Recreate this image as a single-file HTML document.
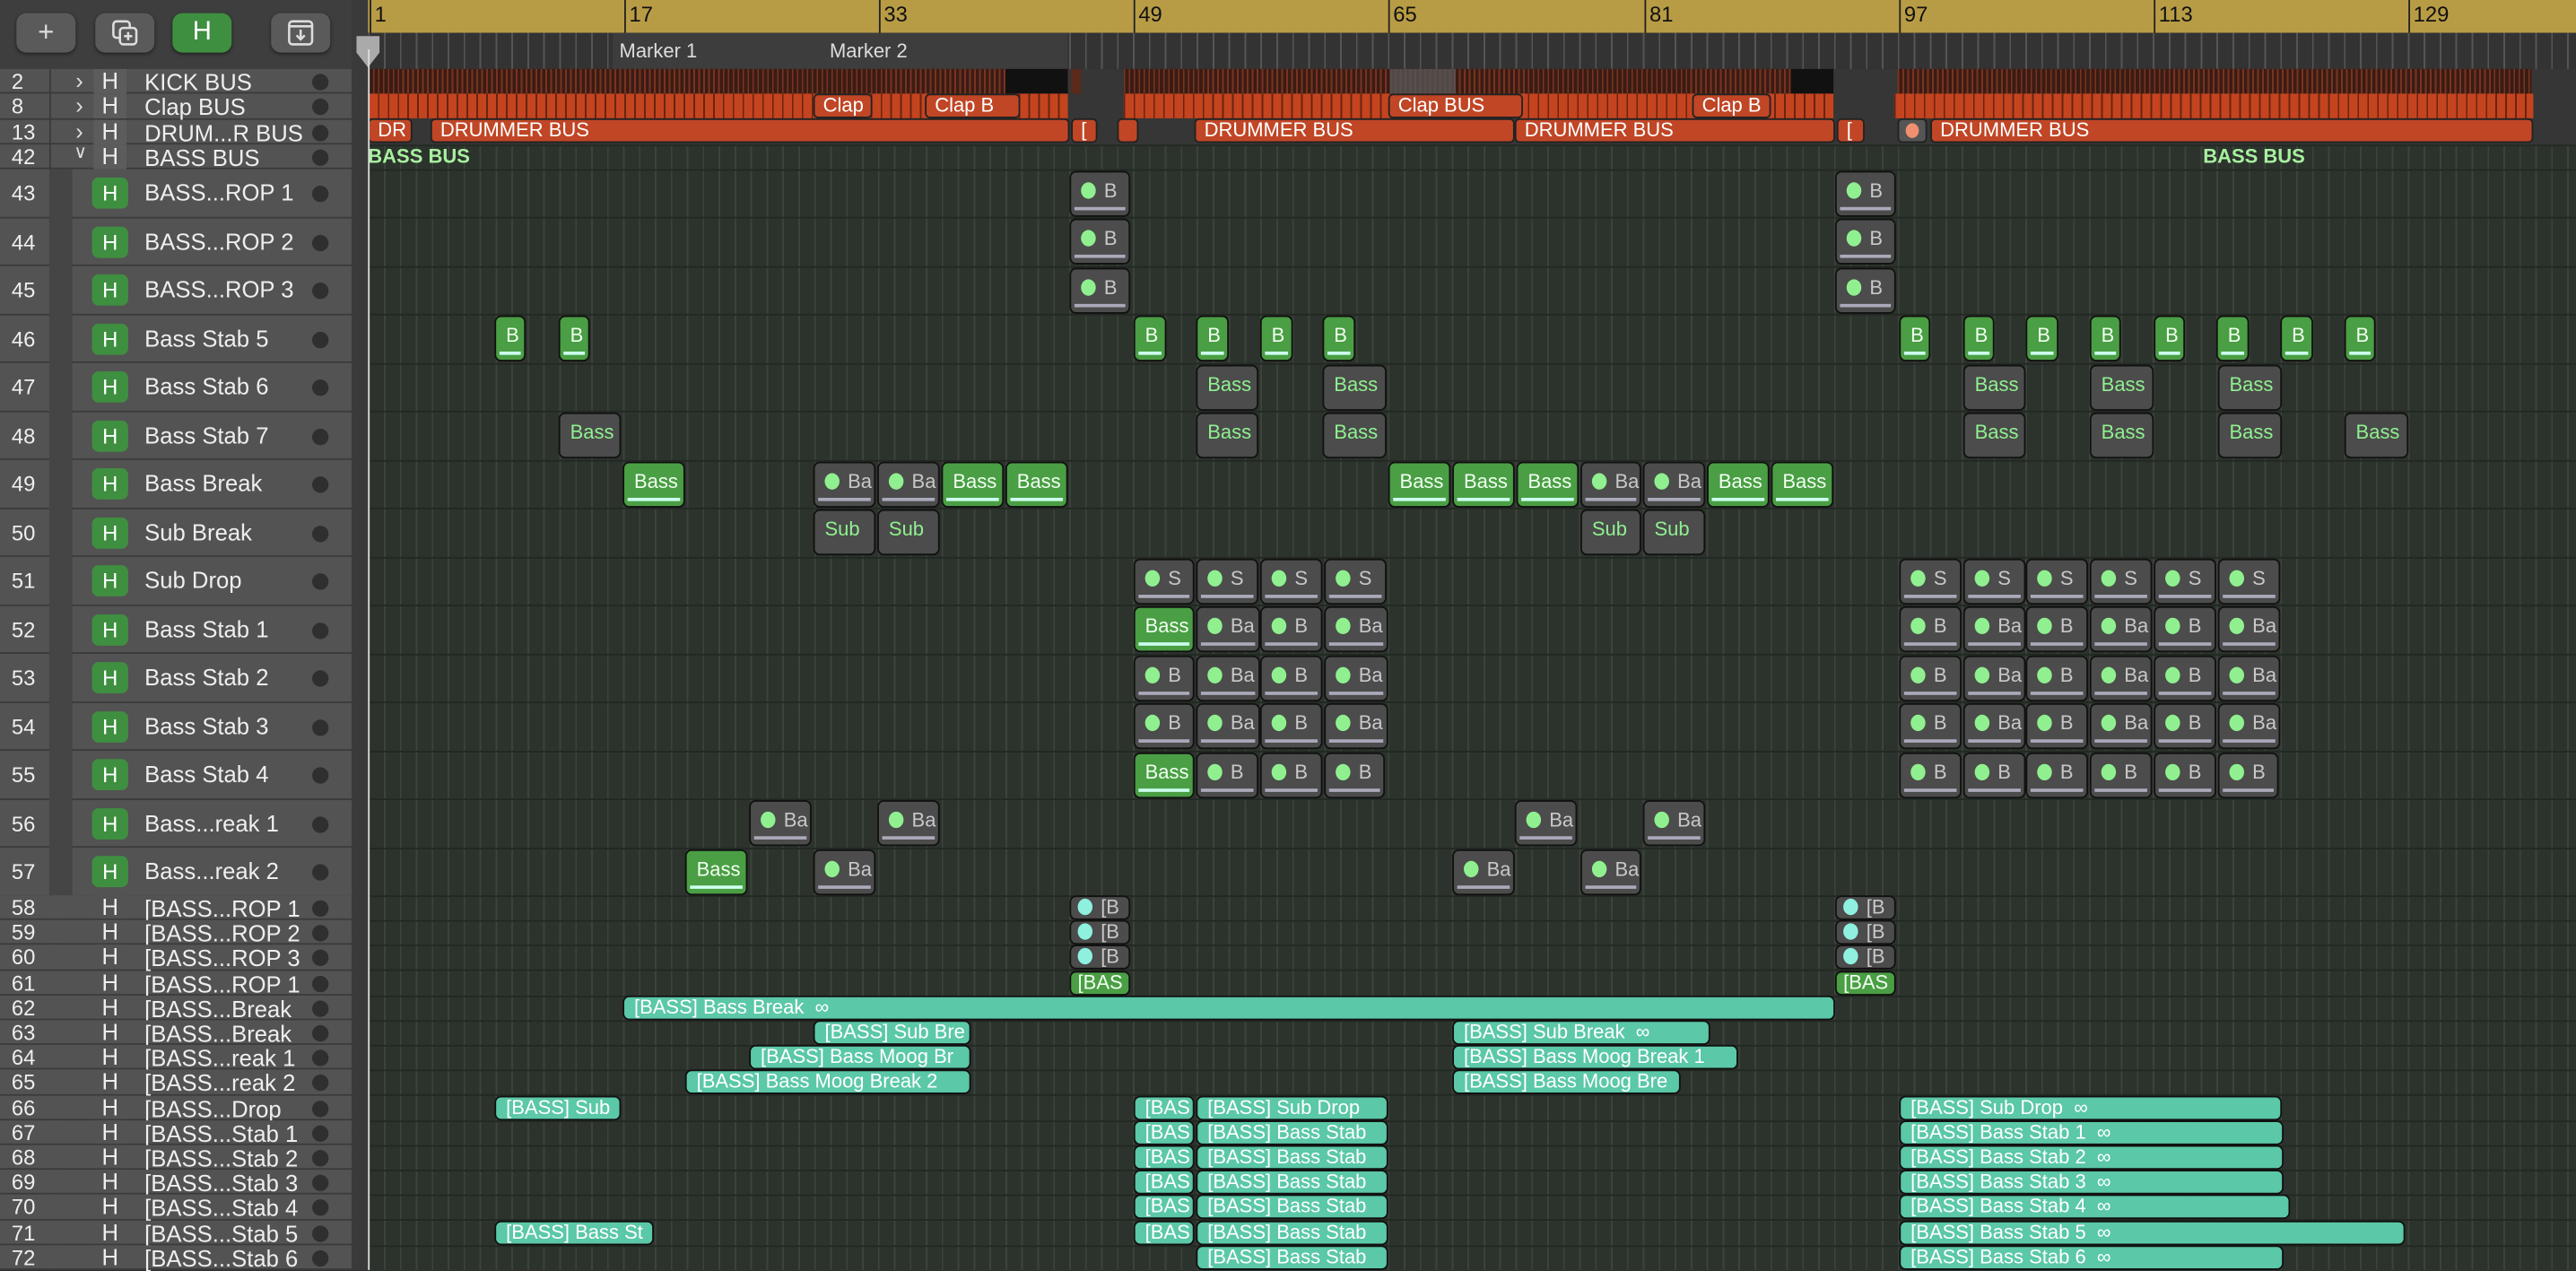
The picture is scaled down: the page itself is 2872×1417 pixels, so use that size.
<!DOCTYPE html>
<html><head><meta charset="utf-8"><style>
html,body{margin:0;padding:0;background:#2c332c;overflow:hidden;width:2872px;height:1416px}
#s{position:absolute;left:0;top:0;width:1568px;height:773px;transform:scale(1.83163);transform-origin:0 0;font-family:"Liberation Sans",sans-serif;background:#2c332c}
.a{position:absolute}
#tb{left:0;top:0;width:214px;height:42px;background:#3e3e3e}
.btn{position:absolute;top:8px;height:24px;width:36px;background:#5a5a5a;border-radius:6px;color:#ddd;text-align:center;line-height:24px;font-size:17px;box-shadow:0 1px 2px #222}
#div{left:214px;top:0;width:10px;height:773px;background:#3a3a3a}
#ruler{left:224px;top:0;width:1344px;height:20px;background:#b89c45}
.rn{position:absolute;top:0;height:20px;border-left:1px solid #222;font-size:13px;color:#111;padding-left:2px;line-height:18px}
#mk{left:224px;top:20px;width:1344px;height:22px;background:#333;background-image:repeating-linear-gradient(90deg,#555 0 1px,transparent 1px 9.7px)}
.row{position:absolute;left:0;width:214px;background:#535353;border-bottom:1px solid #3b3b3b;box-sizing:border-box;color:#eee;font-size:14px}
.num{position:absolute;left:7px;font-size:13px;color:#eee}
.nm{position:absolute;left:88px;white-space:nowrap}
.dot{position:absolute;left:190px;width:10px;height:10px;border-radius:50%;background:#2f2f2f}
.hb{position:absolute;left:56px;width:22px;height:19px;border-radius:4px;background:#3f8f40;color:#fff;text-align:center;line-height:19px;font-size:13px}
.hg{position:absolute;left:57px;width:20px;background:#5c5c5c;text-align:center;color:#eee}
#grid{left:224px;top:42px;width:1344px;height:731px;background-color:#2c332c;background-image:repeating-linear-gradient(90deg,#3b433b 0 1px,transparent 1px 9.7px)}
.hl{position:absolute;left:224px;width:1344px;height:1px;background:#222822}
.c{position:absolute;box-sizing:border-box;border:1px solid #111;border-radius:4px;overflow:hidden;white-space:nowrap;font-size:12px}
.b{height:28px;line-height:22px;padding-left:6px}
.s{height:15px;line-height:13px;font-size:12px;padding-left:4px}
.g{background:#4a9e44;color:#f0fff0}
.k{background:#4b4c4b;color:#c8c8c8}
.kg{background:#4b4c4b;color:#90f090}
.t{background:#5bc8a8;color:#fff;padding-left:6px}
.b.g::after,.b.k::after{content:"";position:absolute;left:2px;right:2px;bottom:3px;height:2px;background:#aab}
.b.g::after{background:#cfe}
.d{display:inline-block;width:9px;height:10px;border-radius:50%;background:#90f090;vertical-align:-1px;margin-right:5px}
.dc{background:#8ff0e0}
.rd{position:absolute;height:15px;background:#3a1c14;background-image:repeating-linear-gradient(90deg,#7a3320 0 1px,transparent 1px 3px)}
.or{position:absolute;height:15px;background:#c4441f;background-image:repeating-linear-gradient(90deg,#6a2410 0 1px,transparent 1px 6px)}
.lb{position:absolute;height:15px;background:#c04626;border-radius:3px;border:1px solid #222;box-sizing:border-box;color:#fff;font-size:12px;line-height:13px;padding-left:5px;white-space:nowrap;overflow:hidden}
</style></head><body><div id="s">
<div id="tb" class="a">
<div class="btn" style="left:10px">+</div>
<div class="btn" style="left:58px"><svg width="20" height="20" viewBox="0 0 20 20" style="margin-top:2px"><rect x="3" y="3" width="10" height="10" rx="2" fill="none" stroke="#ddd" stroke-width="1.4"/><rect x="7" y="7" width="10" height="10" rx="2" fill="#5a5a5a" stroke="#ddd" stroke-width="1.4"/><path d="M12 9.5v5M9.5 12h5" stroke="#ddd" stroke-width="1.4"/></svg></div>
<div class="btn" style="left:105px;background:#3f8f40;color:#fff;font-size:16px">H</div>
<div class="btn" style="left:165px"><svg width="20" height="20" viewBox="0 0 20 20" style="margin-top:2px"><rect x="3" y="3" width="14" height="14" rx="2" fill="none" stroke="#ddd" stroke-width="1.4"/><path d="M3 6h14M10 8v6M7.5 11.5L10 14l2.5-2.5" fill="none" stroke="#ddd" stroke-width="1.4"/></svg></div>
</div>
<div id="div" class="a"></div>
<div id="ruler" class="a">
<div class="rn" style="left:1px">1</div><div class="rn" style="left:156px">17</div><div class="rn" style="left:311px">33</div><div class="rn" style="left:466px">49</div><div class="rn" style="left:621px">65</div><div class="rn" style="left:777px">81</div><div class="rn" style="left:932px">97</div><div class="rn" style="left:1087px">113</div><div class="rn" style="left:1242px">129</div>
</div>
<div id="mk" class="a">
<div class="a" style="left:149px;top:0;width:127px;height:22px;background:#3d3d3d;color:#ddd;font-size:12px;line-height:22px;padding-left:4px;box-sizing:border-box">Marker 1</div>
<div class="a" style="left:276px;top:0;width:150px;height:22px;background:#3d3d3d;color:#ddd;font-size:12px;line-height:22px;padding-left:5px;box-sizing:border-box">Marker 2</div>
</div>
<svg class="a" style="left:215px;top:20px" width="18" height="22"><path d="M2 2h14v10l-7 9-7-9z" fill="#aaa"/></svg>

<div class="row" style="top:42px;height:15.3px"><span class="num" style="top:0">2</span><span class="a" style="left:46px;top:-1px;color:#ddd">›</span><div class="hg" style="top:0;height:15px;line-height:15px">H</div><span class="nm" style="top:0">KICK BUS</span><span class="dot" style="top:3px"></span></div>
<div class="row" style="top:57.3px;height:15.3px"><span class="num" style="top:0">8</span><span class="a" style="left:46px;top:-1px;color:#ddd">›</span><div class="hg" style="top:0;height:15px;line-height:15px">H</div><span class="nm" style="top:0">Clap BUS</span><span class="dot" style="top:3px"></span></div>
<div class="row" style="top:72.6px;height:15.3px"><span class="num" style="top:0">13</span><span class="a" style="left:46px;top:-1px;color:#ddd">›</span><div class="hg" style="top:0;height:15px;line-height:15px">H</div><span class="nm" style="top:0">DRUM...R BUS</span><span class="dot" style="top:3px"></span></div>
<div class="row" style="top:87.9px;height:15.3px"><span class="num" style="top:0">42</span><span class="a" style="left:45px;top:-2px;color:#ddd;font-size:11px">∨</span><div class="hg" style="top:0;height:15px;line-height:15px">H</div><span class="nm" style="top:0">BASS BUS</span><span class="dot" style="top:3px"></span></div>

<div class="row" style="top:103px;height:29.5px;left:0"><span class="num" style="top:7px">43</span><div class="hb" style="top:5px">H</div><span class="nm" style="top:6px">BASS...ROP 1</span><span class="dot" style="top:10px"></span></div>
<div class="row" style="top:132.5px;height:29.5px"><span class="num" style="top:7px">44</span><div class="hb" style="top:5px">H</div><span class="nm" style="top:6px">BASS...ROP 2</span><span class="dot" style="top:10px"></span></div>
<div class="row" style="top:162px;height:29.5px"><span class="num" style="top:7px">45</span><div class="hb" style="top:5px">H</div><span class="nm" style="top:6px">BASS...ROP 3</span><span class="dot" style="top:10px"></span></div>
<div class="row" style="top:191.5px;height:29.5px"><span class="num" style="top:7px">46</span><div class="hb" style="top:5px">H</div><span class="nm" style="top:6px">Bass Stab 5</span><span class="dot" style="top:10px"></span></div>
<div class="row" style="top:221px;height:29.5px"><span class="num" style="top:7px">47</span><div class="hb" style="top:5px">H</div><span class="nm" style="top:6px">Bass Stab 6</span><span class="dot" style="top:10px"></span></div>
<div class="row" style="top:250.5px;height:29.5px"><span class="num" style="top:7px">48</span><div class="hb" style="top:5px">H</div><span class="nm" style="top:6px">Bass Stab 7</span><span class="dot" style="top:10px"></span></div>
<div class="row" style="top:280px;height:29.5px"><span class="num" style="top:7px">49</span><div class="hb" style="top:5px">H</div><span class="nm" style="top:6px">Bass Break</span><span class="dot" style="top:10px"></span></div>
<div class="row" style="top:309.5px;height:29.5px"><span class="num" style="top:7px">50</span><div class="hb" style="top:5px">H</div><span class="nm" style="top:6px">Sub Break</span><span class="dot" style="top:10px"></span></div>
<div class="row" style="top:339px;height:29.5px"><span class="num" style="top:7px">51</span><div class="hb" style="top:5px">H</div><span class="nm" style="top:6px">Sub Drop</span><span class="dot" style="top:10px"></span></div>
<div class="row" style="top:368.5px;height:29.5px"><span class="num" style="top:7px">52</span><div class="hb" style="top:5px">H</div><span class="nm" style="top:6px">Bass Stab 1</span><span class="dot" style="top:10px"></span></div>
<div class="row" style="top:398px;height:29.5px"><span class="num" style="top:7px">53</span><div class="hb" style="top:5px">H</div><span class="nm" style="top:6px">Bass Stab 2</span><span class="dot" style="top:10px"></span></div>
<div class="row" style="top:427.5px;height:29.5px"><span class="num" style="top:7px">54</span><div class="hb" style="top:5px">H</div><span class="nm" style="top:6px">Bass Stab 3</span><span class="dot" style="top:10px"></span></div>
<div class="row" style="top:457px;height:29.5px"><span class="num" style="top:7px">55</span><div class="hb" style="top:5px">H</div><span class="nm" style="top:6px">Bass Stab 4</span><span class="dot" style="top:10px"></span></div>
<div class="row" style="top:486.5px;height:29.5px"><span class="num" style="top:7px">56</span><div class="hb" style="top:5px">H</div><span class="nm" style="top:6px">Bass...reak 1</span><span class="dot" style="top:10px"></span></div>
<div class="row" style="top:516px;height:29.5px"><span class="num" style="top:7px">57</span><div class="hb" style="top:5px">H</div><span class="nm" style="top:6px">Bass...reak 2</span><span class="dot" style="top:10px"></span></div>
<div class="a" style="left:30px;top:103px;width:14px;height:442px;background:#454545"></div>
<div class="a" style="left:30px;top:545px;width:6px;height:228px;background:#454545"></div>

<div class="row" style="top:545px;height:15.2px"><span class="num" style="top:0">58</span><div class="hg" style="top:0;height:14px;line-height:14px;background:#535353">H</div><span class="nm" style="top:0">[BASS...ROP 1</span><span class="dot" style="top:3px"></span></div>
<div class="row" style="top:560.2px;height:15.2px"><span class="num" style="top:0">59</span><div class="hg" style="top:0;height:14px;line-height:14px;background:#535353">H</div><span class="nm" style="top:0">[BASS...ROP 2</span><span class="dot" style="top:3px"></span></div>
<div class="row" style="top:575.4px;height:15.2px"><span class="num" style="top:0">60</span><div class="hg" style="top:0;height:14px;line-height:14px;background:#535353">H</div><span class="nm" style="top:0">[BASS...ROP 3</span><span class="dot" style="top:3px"></span></div>
<div class="row" style="top:590.6px;height:15.2px"><span class="num" style="top:0">61</span><div class="hg" style="top:0;height:14px;line-height:14px;background:#535353">H</div><span class="nm" style="top:0">[BASS...ROP 1</span><span class="dot" style="top:3px"></span></div>
<div class="row" style="top:605.8px;height:15.2px"><span class="num" style="top:0">62</span><div class="hg" style="top:0;height:14px;line-height:14px;background:#535353">H</div><span class="nm" style="top:0">[BASS...Break</span><span class="dot" style="top:3px"></span></div>
<div class="row" style="top:621px;height:15.2px"><span class="num" style="top:0">63</span><div class="hg" style="top:0;height:14px;line-height:14px;background:#535353">H</div><span class="nm" style="top:0">[BASS...Break</span><span class="dot" style="top:3px"></span></div>
<div class="row" style="top:636.2px;height:15.2px"><span class="num" style="top:0">64</span><div class="hg" style="top:0;height:14px;line-height:14px;background:#535353">H</div><span class="nm" style="top:0">[BASS...reak 1</span><span class="dot" style="top:3px"></span></div>
<div class="row" style="top:651.4px;height:15.2px"><span class="num" style="top:0">65</span><div class="hg" style="top:0;height:14px;line-height:14px;background:#535353">H</div><span class="nm" style="top:0">[BASS...reak 2</span><span class="dot" style="top:3px"></span></div>
<div class="row" style="top:666.6px;height:15.2px"><span class="num" style="top:0">66</span><div class="hg" style="top:0;height:14px;line-height:14px;background:#535353">H</div><span class="nm" style="top:0">[BASS...Drop</span><span class="dot" style="top:3px"></span></div>
<div class="row" style="top:681.8px;height:15.2px"><span class="num" style="top:0">67</span><div class="hg" style="top:0;height:14px;line-height:14px;background:#535353">H</div><span class="nm" style="top:0">[BASS...Stab 1</span><span class="dot" style="top:3px"></span></div>
<div class="row" style="top:697px;height:15.2px"><span class="num" style="top:0">68</span><div class="hg" style="top:0;height:14px;line-height:14px;background:#535353">H</div><span class="nm" style="top:0">[BASS...Stab 2</span><span class="dot" style="top:3px"></span></div>
<div class="row" style="top:712.2px;height:15.2px"><span class="num" style="top:0">69</span><div class="hg" style="top:0;height:14px;line-height:14px;background:#535353">H</div><span class="nm" style="top:0">[BASS...Stab 3</span><span class="dot" style="top:3px"></span></div>
<div class="row" style="top:727.4px;height:15.2px"><span class="num" style="top:0">70</span><div class="hg" style="top:0;height:14px;line-height:14px;background:#535353">H</div><span class="nm" style="top:0">[BASS...Stab 4</span><span class="dot" style="top:3px"></span></div>
<div class="row" style="top:742.6px;height:15.2px"><span class="num" style="top:0">71</span><div class="hg" style="top:0;height:14px;line-height:14px;background:#535353">H</div><span class="nm" style="top:0">[BASS...Stab 5</span><span class="dot" style="top:3px"></span></div>
<div class="row" style="top:757.8px;height:15.2px"><span class="num" style="top:0">72</span><div class="hg" style="top:0;height:14px;line-height:14px;background:#535353">H</div><span class="nm" style="top:0">[BASS...Stab 6</span><span class="dot" style="top:3px"></span></div>
<div class="a" style="left:30px;top:42px;width:1px;height:61px;background:#3b3b3b"></div>

<div id="grid" class="a"></div>
<div class="hl" style="top:57px"></div><div class="hl" style="top:72px"></div><div class="hl" style="top:88px"></div><div class="hl" style="top:103px"></div>
<div class="hl" style="top:132px"></div><div class="hl" style="top:162px"></div><div class="hl" style="top:191px"></div><div class="hl" style="top:221px"></div><div class="hl" style="top:250px"></div><div class="hl" style="top:280px"></div><div class="hl" style="top:309px"></div><div class="hl" style="top:339px"></div><div class="hl" style="top:368px"></div><div class="hl" style="top:398px"></div><div class="hl" style="top:427px"></div><div class="hl" style="top:457px"></div><div class="hl" style="top:486px"></div><div class="hl" style="top:516px"></div><div class="hl" style="top:545px"></div>
<div class="hl" style="top:560px"></div><div class="hl" style="top:575px"></div><div class="hl" style="top:590px"></div><div class="hl" style="top:606px"></div><div class="hl" style="top:621px"></div><div class="hl" style="top:636px"></div><div class="hl" style="top:651px"></div><div class="hl" style="top:666px"></div><div class="hl" style="top:682px"></div><div class="hl" style="top:697px"></div><div class="hl" style="top:712px"></div><div class="hl" style="top:727px"></div><div class="hl" style="top:742px"></div><div class="hl" style="top:758px"></div>

<div class="a" style="left:224px;top:42px;width:1344px;height:46px;background:#363636"></div>
<div class="rd" style="left:224px;top:42px;width:426px"></div>
<div class="a" style="left:612px;top:42px;width:38px;height:15px;background:#111"></div>
<div class="a" style="left:652px;top:42px;width:6px;height:15px;background:#5a2a1a"></div>
<div class="rd" style="left:684px;top:42px;width:432px"></div>
<div class="a" style="left:846px;top:42px;width:40px;height:15px;background:#555;opacity:.8"></div>
<div class="a" style="left:1090px;top:42px;width:26px;height:15px;background:#111"></div>
<div class="rd" style="left:1155px;top:42px;width:386px"></div>
<div class="or" style="left:224px;top:57px;width:426px"></div>
<div class="or" style="left:684px;top:57px;width:432px"></div>
<div class="or" style="left:1153px;top:57px;width:389px"></div>
<div class="lb" style="left:495px;top:57px;width:36px">Clap</div>
<div class="lb" style="left:563px;top:57px;width:58px">Clap B</div>
<div class="lb" style="left:845px;top:57px;width:82px">Clap BUS</div>
<div class="lb" style="left:1030px;top:57px;width:48px">Clap B</div>
<div class="lb" style="left:224px;top:72px;width:27px">DR</div>
<div class="lb" style="left:262px;top:72px;width:389px">DRUMMER BUS</div>
<div class="lb" style="left:652px;top:72px;width:16px">[</div>
<div class="lb" style="left:680px;top:72px;width:13px"></div>
<div class="lb" style="left:727px;top:72px;width:195px">DRUMMER BUS</div>
<div class="lb" style="left:922px;top:72px;width:195px">DRUMMER BUS</div>
<div class="lb" style="left:1118px;top:72px;width:17px">[</div>
<div class="lb" style="left:1155px;top:72px;width:18px;background:#555"><span class="a" style="left:4px;top:2px;width:8px;height:9px;border-radius:50%;background:#f09070"></span></div>
<div class="lb" style="left:1175px;top:72px;width:367px">DRUMMER BUS</div>
<div class="a" style="left:224px;top:88px;color:#a8f0a0;font-size:12px;font-weight:bold">BASS BUS</div>
<div class="a" style="left:1341px;top:88px;color:#a8f0a0;font-size:12px;font-weight:bold">BASS BUS</div>

<div class="c b k" style="left:651px;top:104px;width:37px"><span class="d"></span>B</div>
<div class="c b k" style="left:651px;top:133px;width:37px"><span class="d"></span>B</div>
<div class="c b k" style="left:651px;top:163px;width:37px"><span class="d"></span>B</div>
<div class="c b k" style="left:1117px;top:104px;width:37px"><span class="d"></span>B</div>
<div class="c b k" style="left:1117px;top:133px;width:37px"><span class="d"></span>B</div>
<div class="c b k" style="left:1117px;top:163px;width:37px"><span class="d"></span>B</div>
<div class="c b g" style="left:301px;top:192px;width:19px">B</div>
<div class="c b g" style="left:340px;top:192px;width:19px">B</div>
<div class="c b g" style="left:690px;top:192px;width:20px">B</div>
<div class="c b g" style="left:728px;top:192px;width:20px">B</div>
<div class="c b g" style="left:767px;top:192px;width:20px">B</div>
<div class="c b g" style="left:805px;top:192px;width:20px">B</div>
<div class="c b g" style="left:1156px;top:192px;width:19px">B</div>
<div class="c b g" style="left:1195px;top:192px;width:19px">B</div>
<div class="c b g" style="left:1233px;top:192px;width:20px">B</div>
<div class="c b g" style="left:1272px;top:192px;width:19px">B</div>
<div class="c b g" style="left:1311px;top:192px;width:19px">B</div>
<div class="c b g" style="left:1349px;top:192px;width:20px">B</div>
<div class="c b g" style="left:1388px;top:192px;width:20px">B</div>
<div class="c b g" style="left:1427px;top:192px;width:19px">B</div>
<div class="c b kg" style="left:728px;top:222px;width:38px">Bass</div>
<div class="c b kg" style="left:805px;top:222px;width:39px">Bass</div>
<div class="c b kg" style="left:1195px;top:222px;width:38px">Bass</div>
<div class="c b kg" style="left:1272px;top:222px;width:39px">Bass</div>
<div class="c b kg" style="left:1350px;top:222px;width:39px">Bass</div>
<div class="c b kg" style="left:340px;top:251px;width:38px">Bass</div>
<div class="c b kg" style="left:728px;top:251px;width:38px">Bass</div>
<div class="c b kg" style="left:805px;top:251px;width:39px">Bass</div>
<div class="c b kg" style="left:1195px;top:251px;width:38px">Bass</div>
<div class="c b kg" style="left:1272px;top:251px;width:39px">Bass</div>
<div class="c b kg" style="left:1350px;top:251px;width:39px">Bass</div>
<div class="c b kg" style="left:1427px;top:251px;width:39px">Bass</div>
<div class="c b g" style="left:379px;top:281px;width:38px">Bass</div>
<div class="c b k" style="left:495px;top:281px;width:38px"><span class="d"></span>Ba</div>
<div class="c b k" style="left:534px;top:281px;width:38px"><span class="d"></span>Ba</div>
<div class="c b g" style="left:573px;top:281px;width:38px">Bass</div>
<div class="c b g" style="left:612px;top:281px;width:38px">Bass</div>
<div class="c b g" style="left:845px;top:281px;width:38px">Bass</div>
<div class="c b g" style="left:884px;top:281px;width:38px">Bass</div>
<div class="c b g" style="left:923px;top:281px;width:38px">Bass</div>
<div class="c b k" style="left:962px;top:281px;width:37px"><span class="d"></span>Ba</div>
<div class="c b k" style="left:1000px;top:281px;width:38px"><span class="d"></span>Ba</div>
<div class="c b g" style="left:1039px;top:281px;width:38px">Bass</div>
<div class="c b g" style="left:1078px;top:281px;width:38px">Bass</div>
<div class="c b kg" style="left:495px;top:310px;width:38px">Sub</div>
<div class="c b kg" style="left:534px;top:310px;width:38px">Sub</div>
<div class="c b kg" style="left:962px;top:310px;width:37px">Sub</div>
<div class="c b kg" style="left:1000px;top:310px;width:38px">Sub</div>
<div class="c b k" style="left:690px;top:340px;width:37px"><span class="d"></span>S</div>
<div class="c b k" style="left:728px;top:340px;width:38px"><span class="d"></span>S</div>
<div class="c b k" style="left:767px;top:340px;width:38px"><span class="d"></span>S</div>
<div class="c b k" style="left:806px;top:340px;width:38px"><span class="d"></span>S</div>
<div class="c b k" style="left:1156px;top:340px;width:38px"><span class="d"></span>S</div>
<div class="c b k" style="left:1195px;top:340px;width:38px"><span class="d"></span>S</div>
<div class="c b k" style="left:1233px;top:340px;width:38px"><span class="d"></span>S</div>
<div class="c b k" style="left:1272px;top:340px;width:38px"><span class="d"></span>S</div>
<div class="c b k" style="left:1311px;top:340px;width:38px"><span class="d"></span>S</div>
<div class="c b k" style="left:1350px;top:340px;width:38px"><span class="d"></span>S</div>
<div class="c b g" style="left:690px;top:369px;width:37px">Bass</div>
<div class="c b k" style="left:728px;top:369px;width:39px"><span class="d"></span>Ba</div>
<div class="c b k" style="left:767px;top:369px;width:38px"><span class="d"></span>B</div>
<div class="c b k" style="left:806px;top:369px;width:39px"><span class="d"></span>Ba</div>
<div class="c b k" style="left:1156px;top:369px;width:38px"><span class="d"></span>B</div>
<div class="c b k" style="left:1195px;top:369px;width:38px"><span class="d"></span>Ba</div>
<div class="c b k" style="left:1233px;top:369px;width:38px"><span class="d"></span>B</div>
<div class="c b k" style="left:1272px;top:369px;width:38px"><span class="d"></span>Ba</div>
<div class="c b k" style="left:1311px;top:369px;width:38px"><span class="d"></span>B</div>
<div class="c b k" style="left:1350px;top:369px;width:38px"><span class="d"></span>Ba</div>
<div class="c b k" style="left:690px;top:399px;width:37px"><span class="d"></span>B</div>
<div class="c b k" style="left:728px;top:399px;width:39px"><span class="d"></span>Ba</div>
<div class="c b k" style="left:767px;top:399px;width:38px"><span class="d"></span>B</div>
<div class="c b k" style="left:806px;top:399px;width:39px"><span class="d"></span>Ba</div>
<div class="c b k" style="left:1156px;top:399px;width:38px"><span class="d"></span>B</div>
<div class="c b k" style="left:1195px;top:399px;width:38px"><span class="d"></span>Ba</div>
<div class="c b k" style="left:1233px;top:399px;width:38px"><span class="d"></span>B</div>
<div class="c b k" style="left:1272px;top:399px;width:38px"><span class="d"></span>Ba</div>
<div class="c b k" style="left:1311px;top:399px;width:38px"><span class="d"></span>B</div>
<div class="c b k" style="left:1350px;top:399px;width:38px"><span class="d"></span>Ba</div>
<div class="c b k" style="left:690px;top:428px;width:37px"><span class="d"></span>B</div>
<div class="c b k" style="left:728px;top:428px;width:39px"><span class="d"></span>Ba</div>
<div class="c b k" style="left:767px;top:428px;width:38px"><span class="d"></span>B</div>
<div class="c b k" style="left:806px;top:428px;width:39px"><span class="d"></span>Ba</div>
<div class="c b k" style="left:1156px;top:428px;width:38px"><span class="d"></span>B</div>
<div class="c b k" style="left:1195px;top:428px;width:38px"><span class="d"></span>Ba</div>
<div class="c b k" style="left:1233px;top:428px;width:38px"><span class="d"></span>B</div>
<div class="c b k" style="left:1272px;top:428px;width:38px"><span class="d"></span>Ba</div>
<div class="c b k" style="left:1311px;top:428px;width:38px"><span class="d"></span>B</div>
<div class="c b k" style="left:1350px;top:428px;width:38px"><span class="d"></span>Ba</div>
<div class="c b g" style="left:690px;top:458px;width:37px">Bass</div>
<div class="c b k" style="left:728px;top:458px;width:38px"><span class="d"></span>B</div>
<div class="c b k" style="left:767px;top:458px;width:38px"><span class="d"></span>B</div>
<div class="c b k" style="left:806px;top:458px;width:37px"><span class="d"></span>B</div>
<div class="c b k" style="left:1156px;top:458px;width:38px"><span class="d"></span>B</div>
<div class="c b k" style="left:1195px;top:458px;width:38px"><span class="d"></span>B</div>
<div class="c b k" style="left:1233px;top:458px;width:38px"><span class="d"></span>B</div>
<div class="c b k" style="left:1272px;top:458px;width:38px"><span class="d"></span>B</div>
<div class="c b k" style="left:1311px;top:458px;width:38px"><span class="d"></span>B</div>
<div class="c b k" style="left:1350px;top:458px;width:37px"><span class="d"></span>B</div>
<div class="c b k" style="left:456px;top:487px;width:38px"><span class="d"></span>Ba</div>
<div class="c b k" style="left:534px;top:487px;width:38px"><span class="d"></span>Ba</div>
<div class="c b k" style="left:922px;top:487px;width:38px"><span class="d"></span>Ba</div>
<div class="c b k" style="left:1000px;top:487px;width:38px"><span class="d"></span>Ba</div>
<div class="c b g" style="left:417px;top:517px;width:38px">Bass</div>
<div class="c b k" style="left:495px;top:517px;width:38px"><span class="d"></span>Ba</div>
<div class="c b k" style="left:884px;top:517px;width:38px"><span class="d"></span>Ba</div>
<div class="c b k" style="left:962px;top:517px;width:37px"><span class="d"></span>Ba</div>
<div class="c s k" style="left:651px;top:545px;width:37px"><span class="d dc"></span>[B</div>
<div class="c s k" style="left:651px;top:560px;width:37px"><span class="d dc"></span>[B</div>
<div class="c s k" style="left:651px;top:575px;width:37px"><span class="d dc"></span>[B</div>
<div class="c s g" style="left:651px;top:591px;width:37px">[BAS</div>
<div class="c s k" style="left:1117px;top:545px;width:37px"><span class="d dc"></span>[B</div>
<div class="c s k" style="left:1117px;top:560px;width:37px"><span class="d dc"></span>[B</div>
<div class="c s k" style="left:1117px;top:575px;width:37px"><span class="d dc"></span>[B</div>
<div class="c s g" style="left:1117px;top:591px;width:37px">[BAS</div>
<div class="c s t" style="left:379px;top:606px;width:738px">[BASS] Bass Break &nbsp;∞</div>
<div class="c s t" style="left:495px;top:621px;width:96px">[BASS] Sub Bre</div>
<div class="c s t" style="left:884px;top:621px;width:157px">[BASS] Sub Break &nbsp;∞</div>
<div class="c s t" style="left:456px;top:636px;width:135px">[BASS] Bass Moog Br</div>
<div class="c s t" style="left:884px;top:636px;width:174px">[BASS] Bass Moog Break 1</div>
<div class="c s t" style="left:417px;top:651px;width:174px">[BASS] Bass Moog Break 2</div>
<div class="c s t" style="left:884px;top:651px;width:139px">[BASS] Bass Moog Bre</div>
<div class="c s t" style="left:301px;top:667px;width:77px">[BASS] Sub</div>
<div class="c s t" style="left:690px;top:667px;width:37px">[BAS</div>
<div class="c s t" style="left:728px;top:667px;width:117px">[BASS] Sub Drop</div>
<div class="c s t" style="left:1156px;top:667px;width:233px">[BASS] Sub Drop &nbsp;∞</div>
<div class="c s t" style="left:690px;top:682px;width:37px">[BAS</div>
<div class="c s t" style="left:728px;top:682px;width:117px">[BASS] Bass Stab</div>
<div class="c s t" style="left:1156px;top:682px;width:234px">[BASS] Bass Stab 1 &nbsp;∞</div>
<div class="c s t" style="left:690px;top:697px;width:37px">[BAS</div>
<div class="c s t" style="left:728px;top:697px;width:117px">[BASS] Bass Stab</div>
<div class="c s t" style="left:1156px;top:697px;width:234px">[BASS] Bass Stab 2 &nbsp;∞</div>
<div class="c s t" style="left:690px;top:712px;width:37px">[BAS</div>
<div class="c s t" style="left:728px;top:712px;width:117px">[BASS] Bass Stab</div>
<div class="c s t" style="left:1156px;top:712px;width:234px">[BASS] Bass Stab 3 &nbsp;∞</div>
<div class="c s t" style="left:690px;top:727px;width:37px">[BAS</div>
<div class="c s t" style="left:728px;top:727px;width:117px">[BASS] Bass Stab</div>
<div class="c s t" style="left:1156px;top:727px;width:238px">[BASS] Bass Stab 4 &nbsp;∞</div>
<div class="c s t" style="left:301px;top:743px;width:97px">[BASS] Bass St</div>
<div class="c s t" style="left:690px;top:743px;width:37px">[BAS</div>
<div class="c s t" style="left:728px;top:743px;width:117px">[BASS] Bass Stab</div>
<div class="c s t" style="left:1156px;top:743px;width:308px">[BASS] Bass Stab 5 &nbsp;∞</div>
<div class="c s t" style="left:728px;top:758px;width:117px">[BASS] Bass Stab</div>
<div class="c s t" style="left:1156px;top:758px;width:234px">[BASS] Bass Stab 6 &nbsp;∞</div>
<div class="a" style="left:224px;top:30px;width:1px;height:743px;background:#ddd"></div>
</div></body></html>
